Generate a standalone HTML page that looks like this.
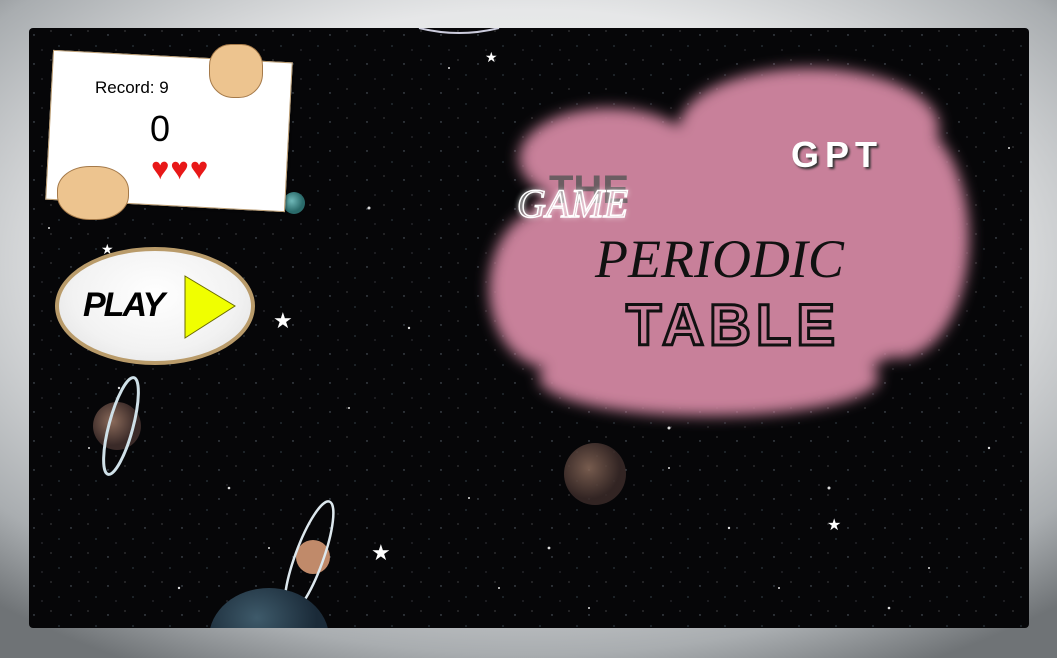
<!DOCTYPE html>
<html><head><meta charset="utf-8"><style>
html,body{margin:0;padding:0}
body{width:1057px;height:658px;overflow:hidden;position:relative;font-family:"Liberation Sans",sans-serif;
background:radial-gradient(ellipse 75% 70% at 50% 40%,#f4f4f4 0%,#e6e7e8 55%,#a9adb0 85%,#6f7376 100%);}
#game{position:absolute;left:29px;top:28px;width:1000px;height:600px;background:#060608;border-radius:4px;overflow:hidden}
.abs{position:absolute}
</style></head><body>
<div id="game">
<svg class="abs" style="left:0;top:0" width="1000" height="600">
<defs>
<filter id="bl" x="-20%" y="-20%" width="140%" height="140%"><feGaussianBlur stdDeviation="7"/></filter>
<radialGradient id="pl1" cx="40%" cy="40%"><stop offset="0" stop-color="#8a6a5a"/><stop offset="1" stop-color="#3a2a28"/></radialGradient>
<radialGradient id="pl2" cx="40%" cy="40%"><stop offset="0" stop-color="#6fb8b8"/><stop offset="1" stop-color="#2a6a6a"/></radialGradient>
<radialGradient id="pl3" cx="40%" cy="30%"><stop offset="0" stop-color="#3e5a6a"/><stop offset="1" stop-color="#1a2a38"/></radialGradient>
<pattern id="grain" width="37" height="29" patternUnits="userSpaceOnUse">
<circle cx="5" cy="7" r="0.7" fill="#9ab"/><circle cx="22" cy="3" r="0.5" fill="#fff"/><circle cx="30" cy="18" r="0.6" fill="#8ab"/><circle cx="13" cy="22" r="0.5" fill="#ccd"/>
</pattern>
</defs>
<rect width="1000" height="600" fill="url(#grain)" opacity="0.6"/>
<g fill="#fff" opacity="0.85">
<circle cx="120" cy="60" r="1"/><circle cx="340" cy="180" r="1.5"/><circle cx="420" cy="40" r="1"/><circle cx="380" cy="300" r="1.2"/><circle cx="60" cy="420" r="1"/><circle cx="200" cy="460" r="1.3"/><circle cx="440" cy="470" r="1"/><circle cx="520" cy="520" r="1.4"/><circle cx="640" cy="440" r="1"/><circle cx="700" cy="500" r="1.2"/><circle cx="800" cy="460" r="1.5"/><circle cx="900" cy="540" r="1"/><circle cx="960" cy="420" r="1.2"/><circle cx="980" cy="120" r="1"/><circle cx="240" cy="520" r="1"/><circle cx="150" cy="560" r="1.2"/><circle cx="560" cy="580" r="1"/><circle cx="860" cy="580" r="1.3"/><circle cx="320" cy="380" r="1"/><circle cx="20" cy="200" r="1"/><circle cx="90" cy="360" r="1.2"/><circle cx="640" cy="400" r="1.5"/><circle cx="470" cy="560" r="1"/><circle cx="750" cy="560" r="1"/>
</g>
<g fill="#fff">
<text x="244" y="300" font-size="22">★</text><text x="342" y="532" font-size="22">★</text><text x="798" y="502" font-size="16">★</text><text x="72" y="226" font-size="14">★</text><text x="456" y="34" font-size="14">★</text>
</g>
<circle cx="265" cy="175" r="11" fill="url(#pl2)"/>
<circle cx="88" cy="398" r="24" fill="url(#pl1)"/>
<ellipse cx="92" cy="398" rx="12" ry="50" fill="none" stroke="#cfe0e8" stroke-width="3" transform="rotate(15 92 398)"/>
<circle cx="566" cy="446" r="31" fill="url(#pl1)" opacity="0.85"/>
<circle cx="284" cy="529" r="17" fill="#c08a6a"/>
<ellipse cx="280" cy="530" rx="14" ry="60" fill="none" stroke="#dde8ee" stroke-width="2.5" transform="rotate(20 280 530)"/>
<ellipse cx="240" cy="610" rx="60" ry="50" fill="url(#pl3)"/>
<path d="M390 0 Q430 10 470 0" stroke="#ccd" stroke-width="2" fill="none"/>
<g filter="url(#bl)" fill="#c8809a">
<ellipse cx="700" cy="240" rx="220" ry="130"/><ellipse cx="580" cy="130" rx="90" ry="50"/><ellipse cx="780" cy="100" rx="130" ry="60"/>
<ellipse cx="870" cy="210" rx="70" ry="120"/><ellipse cx="520" cy="260" rx="60" ry="80"/><ellipse cx="680" cy="350" rx="170" ry="38"/>
</g>
</svg>
<!-- card -->
<div class="abs" style="left:20px;top:28px;width:238px;height:148px;background:#fff;transform:rotate(3deg);border:1px solid #b89a70;box-shadow:1px 1px 2px #0006"></div>
<div class="abs" style="left:180px;top:16px;width:52px;height:52px;border-radius:40% 40% 45% 45%;background:#edc48f;border:1px solid #a57a4a"></div>
<div class="abs" style="left:28px;top:138px;width:70px;height:52px;border-radius:45%;background:#edc48f;border:1px solid #a57a4a"></div>
<div class="abs" style="left:66px;top:50px;font-size:17px;color:#000">Record: 9</div>
<div class="abs" style="left:121px;top:80px;font-size:36px;color:#000">0</div>
<div class="abs" style="left:122px;top:124px;font-size:31px;color:#e81818;letter-spacing:1px;line-height:34px">♥♥♥</div>
<!-- play -->
<div class="abs" style="left:26px;top:219px;width:200px;height:118px;border-radius:50%;background:radial-gradient(ellipse at 50% 40%,#fff 0%,#f2f2f2 60%,#ddd 100%);border:4px solid #b99b6a;box-sizing:border-box"></div>
<div class="abs" style="left:54px;top:258px;font-size:34px;font-weight:bold;font-style:italic;color:#000;letter-spacing:-2px">PLAY</div>
<svg class="abs" style="left:152px;top:246px" width="60" height="66"><polygon points="4,2 54,32 4,64" fill="#f0ff00" stroke="#6a6a00" stroke-width="1"/></svg>
<!-- title -->
<div class="abs" style="left:520px;top:140px;font-size:40px;font-weight:bold;color:#555;opacity:.8">THE</div>
<div class="abs" style="left:488px;top:152px;font-size:40px;font-family:'Liberation Serif',serif;font-style:italic;color:transparent;-webkit-text-stroke:1.5px #fff;text-shadow:0 0 6px #fff">GAME</div>
<div class="abs" style="left:762px;top:106px;font-size:36px;font-weight:bold;color:#fff;letter-spacing:6px;text-shadow:2px 2px 2px #333">GPT</div>
<div class="abs" style="left:566px;top:200px;font-size:54px;font-style:italic;color:#111;font-family:'Liberation Serif',serif;letter-spacing:0px">PERIODIC</div>
<div class="abs" style="left:597px;top:264px;font-size:58px;font-weight:bold;color:transparent;-webkit-text-stroke:3px #111;letter-spacing:5px">TABLE</div>
</div>
</body></html>
